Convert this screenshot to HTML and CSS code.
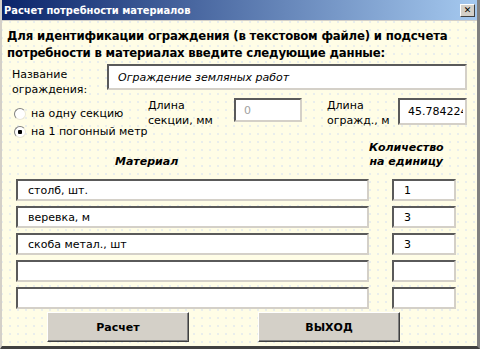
FILE: index.html
```html
<!DOCTYPE html>
<html lang="ru">
<head>
    <meta charset="UTF-8">
    <title>Расчет потребности материалов</title>
    <link rel="stylesheet" href="styles.css">
</head>
<body>
    <div class="window">
        <!-- Заголовок окна -->
        <div class="titlebar">
            <span class="caption">Расчет потребности материалов</span>
            <span class="close">✕</span>
        </div>

        <div class="form">
            <p class="intro">Для идентификации ограждения (в текстовом файле) и подсчета<br>потребности в материалах введите следующие данные:</p>

            <div class="name-row">
                <label class="lbl name-lbl">Название<br>ограждения:</label>
                <input class="box name-box" type="text" value="Ограждение земляных работ">
            </div>

            <div class="opts-row">
                <div class="radios">
                    <label class="radio"><input type="radio" name="mode"> на одну секцию</label>
                    <label class="radio"><input type="radio" name="mode" checked> на 1 погонный метр</label>
                </div>
                <label class="lbl len-lbl">Длина<br>секции, мм</label>
                <input class="box sec-box" type="text" value="0" disabled>
                <label class="lbl len-lbl total-lbl">Длина<br>огражд., м</label>
                <input class="box total-box" type="text" value="45.784224">
            </div>

            <div class="heads">
                <span class="head-mat">Материал</span>
                <span class="head-qty">Количество<br>на единицу</span>
            </div>

            <div class="items">
                <input class="box mat" type="text" value="столб, шт.">
                <input class="box qty" type="text" value="1">
                <input class="box mat" type="text" value="веревка, м">
                <input class="box qty" type="text" value="3">
                <input class="box mat" type="text" value="скоба метал., шт">
                <input class="box qty" type="text" value="3">
                <input class="box mat" type="text" value="">
                <input class="box qty" type="text" value="">
                <input class="box mat" type="text" value="">
                <input class="box qty" type="text" value="">
            </div>

            <div class="buttons">
                <button>Расчет</button>
                <button>ВЫХОД</button>
            </div>
        </div>
    </div>
</body>
</html>
```

FILE: styles.css
```css
body {
    margin: 0;
    font-family: "DejaVu Sans", Tahoma, sans-serif;
    font-size: 11px;
    color: #000;
    background: #fff;
}

.window {
    width: 480px;
    height: 349px;
    box-sizing: border-box;
    border-left: 2px solid #d4d0c8;
    border-right: 3px solid #808080;
    border-bottom: 3px solid #404040;
    background-color: #fffde6;
    /* точечная сетка режима конструктора */
    background-image: radial-gradient(circle, #dde6ee 0.6px, transparent 0.9px);
    background-size: 8px 8px;
    background-position: 4px 2px;
    display: flex;
    flex-direction: column;
    overflow: hidden;
}

.titlebar {
    flex: none;
    height: 21px;
    margin-left: -2px;
    margin-right: -3px;
    background: linear-gradient(to right, #0a246a, #a6caf0);
    border-bottom: 1px solid #d4d0c8;
    display: flex;
    align-items: center;
    justify-content: space-between;
    padding: 0 5px 0 4px;
    box-sizing: border-box;
}

.caption {
    color: #fff;
    font-weight: bold;
    font-size: 11px;
    font-stretch: condensed;
}

.close {
    width: 15px;
    height: 13px;
    box-sizing: border-box;
    background: #d4d0c8;
    border: 1px solid;
    border-color: #fff #404040 #404040 #fff;
    font-size: 9px;
    font-weight: bold;
    line-height: 11px;
    text-align: center;
}

.form {
    flex: 1;
    padding: 6px 0 0 5px;
}

.intro {
    margin: 0;
    white-space: nowrap;
    font-size: 13px;
    font-weight: bold;
    font-stretch: condensed;
    letter-spacing: -0.17px;
    line-height: 17px;
}

.box {
    box-sizing: border-box;
    margin: 0;
    background: #fff;
    border: 2px solid;
    border-color: #5a5a5a #d4d0c8 #d4d0c8 #5a5a5a;
    font-family: inherit;
    font-size: 11px;
    color: #000;
    outline: none;
}

.lbl {
    line-height: 15px;
}

.name-row {
    display: flex;
    height: 26px;
    margin-top: 3px;
}

.name-lbl {
    width: 95px;
    padding: 3px 0 0 5px;
}

.name-box {
    width: 360px;
    height: 26px;
    padding-left: 9px;
    font-style: italic;
}

.opts-row {
    display: flex;
    align-items: flex-start;
    margin-top: 8px;
}

.radios {
    flex: none;
    width: 134px;
    min-width: 0;
    padding: 9px 0 0 7px;
    display: flex;
    flex-direction: column;
    gap: 4px;
}

.radio {
    display: flex;
    align-items: center;
    gap: 5px;
    line-height: 14px;
    white-space: nowrap;
}

.radio input {
    appearance: none;
    margin: 0;
    width: 12px;
    height: 12px;
    border-radius: 50%;
    border: 1px solid;
    border-color: #808080 #ece9d8 #ece9d8 #808080;
    background: #fff;
}

.radio input:checked {
    background: radial-gradient(circle, #000 2px, #fff 2.5px);
}

.len-lbl {
    flex: none;
    width: 86px;
}

.sec-box {
    width: 68px;
    height: 24px;
    padding-left: 8px;
    color: #a0a0a0;
}

.total-lbl {
    margin-left: 25px;
    width: 71px;
}

.total-box {
    width: 69px;
    height: 27px;
    padding-left: 8px;
}

.heads {
    display: flex;
    margin-top: 2px;
    font-weight: bold;
    font-style: italic;
    font-size: 11px;
}

.head-mat {
    margin: 14px 0 0 108px;
}

.head-qty {
    margin-left: 187px;
    width: 82px;
    line-height: 14px;
    text-align: center;
}

.items {
    display: grid;
    grid-template-columns: 353px 64px;
    column-gap: 23px;
    row-gap: 5px;
    margin: 10px 0 0 9px;
}

.items .box {
    height: 22px;
}

.mat {
    padding-left: 10px;
}

.qty {
    padding-left: 10px;
}

.buttons {
    display: flex;
    gap: 69px;
    margin: 3px 0 0 40px;
}

button {
    width: 142px;
    height: 30px;
    background: #d4d0c8;
    border: 1px solid;
    border-color: #fff #404040 #404040 #fff;
    box-shadow: inset -1px -1px 0 #808080;
    font-family: inherit;
    font-size: 11px;
    font-weight: bold;
}
```
